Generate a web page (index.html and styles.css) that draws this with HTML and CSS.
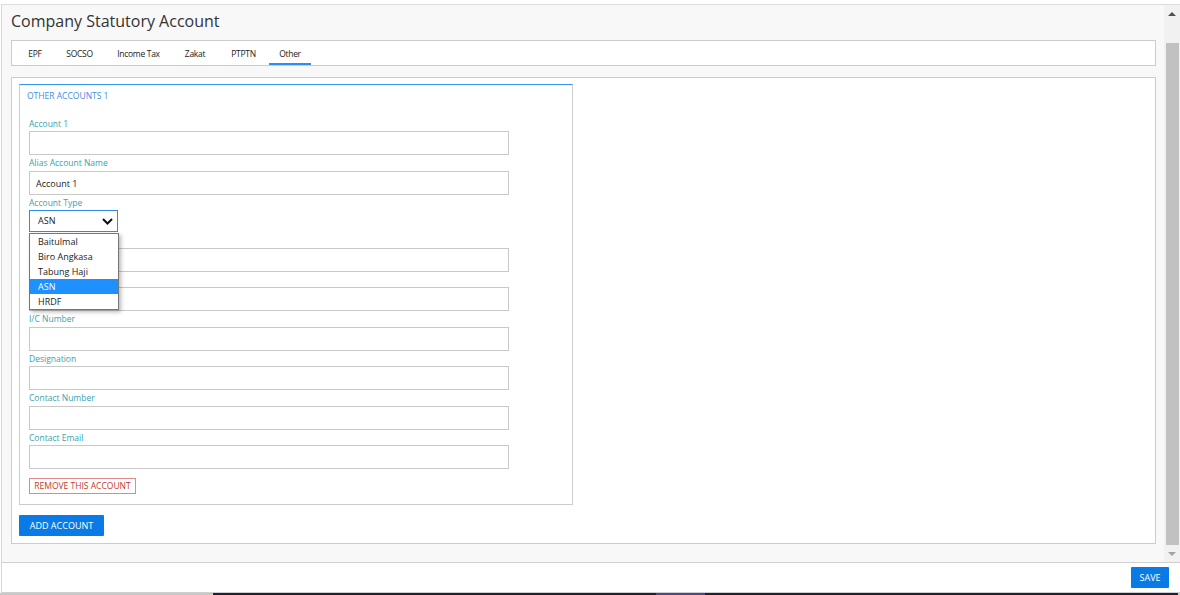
FILE: index.html
```html
<!DOCTYPE html>
<html>
<head>
<meta charset="utf-8">
<link rel="stylesheet" href="styles.css">
</head>
<body>
<div class="modal">
  <div class="main">
    <div class="body">
      <h1 class="title">Company Statutory Account</h1>
      <div class="tabs">
        <div class="tab">EPF</div>
        <div class="tab">SOCSO</div>
        <div class="tab">Income Tax</div>
        <div class="tab">Zakat</div>
        <div class="tab">PTPTN</div>
        <div class="tab active">Other</div>
      </div>
      <div class="panel">
        <div class="fieldset">
          <div class="legend">OTHER ACCOUNTS 1</div>
          <div class="group">
            <div class="label">Account 1</div>
            <div class="input"></div>
          </div>
          <div class="group">
            <div class="label">Alias Account Name</div>
            <div class="input">Account 1</div>
          </div>
          <div class="group select-group">
            <div class="label">Account Type</div>
            <div class="select">
              <span>ASN</span>
              <svg class="chev" width="11" height="7" viewBox="0 0 11 7"><polyline points="1,1 5.5,5.5 10,1" fill="none" stroke="#111" stroke-width="2"/></svg>
            </div>
            <div class="dropdown">
              <div class="opt">Baitulmal</div>
              <div class="opt">Biro Angkasa</div>
              <div class="opt">Tabung Haji</div>
              <div class="opt selected">ASN</div>
              <div class="opt">HRDF</div>
            </div>
          </div>
          <div class="group">
            <div class="label"></div>
            <div class="input"></div>
          </div>
          <div class="group">
            <div class="label"></div>
            <div class="input"></div>
          </div>
          <div class="group">
            <div class="label">I/C Number</div>
            <div class="input"></div>
          </div>
          <div class="group">
            <div class="label">Designation</div>
            <div class="input"></div>
          </div>
          <div class="group">
            <div class="label">Contact Number</div>
            <div class="input"></div>
          </div>
          <div class="group">
            <div class="label">Contact Email</div>
            <div class="input"></div>
          </div>
          <div class="remove">REMOVE THIS ACCOUNT</div>
        </div>
        <div class="add">ADD ACCOUNT</div>
      </div>
    </div>
    <div class="scrollbar">
      <div class="sb-btn"><span class="arrow-up"></span></div>
      <div class="sb-track"><div class="thumb"></div></div>
      <div class="sb-btn"><span class="arrow-down"></span></div>
    </div>
  </div>
  <div class="footer">
    <div class="save">SAVE</div>
  </div>
</div>
<div class="strip">
  <div class="s-gray"></div>
  <div class="s-dark"></div>
  <div class="s-purple"></div>
  <div class="s-dark2"></div>
  <div class="s-end"></div>
</div>
</body>
</html>
```

FILE: styles.css
```css
* { box-sizing: border-box; }
html, body { margin: 0; padding: 0; background: #fff; }
body {
  font-family: "Open Sans", "Noto Sans", sans-serif;
  color: #222;
  width: 1180px;
  height: 595px;
  overflow: hidden;
  padding-top: 4px;
}
.modal {
  margin-left: 1px;
  width: 1179px;
  height: 589px;
  border-top: 1px solid #dcdcdc;
  border-left: 1px solid #d6d6d6;
  border-bottom: 1px solid #cfcfcf;
  display: flex;
  flex-direction: column;
}
.main {
  height: 557px;
  display: flex;
  background: #f8f8f8;
}
.body {
  flex: 1;
  padding: 4px 8px 0 9px;
}
.title {
  margin: 0 0 7px 0;
  font-size: 16px;
  line-height: 24px;
  font-weight: 500;
  color: #333;
}
.tabs {
  height: 26px;
  background: #fff;
  border: 1px solid #cccccc;
  display: flex;
  padding-left: 4px;
}
.tab {
  font-size: 8.5px;
  letter-spacing: -0.3px;
  line-height: 22px;
  padding: 2px 0 0 0;
  border-bottom: 2px solid transparent;
  height: 24px;
  color: #222;
  text-align: center;
}
.tab:nth-child(1) { width: 38px; }
.tab:nth-child(2) { width: 51px; }
.tab:nth-child(3) { width: 67px; }
.tab:nth-child(4) { width: 46px; }
.tab:nth-child(5) { width: 51px; }
.tab:nth-child(6) { width: 42px; }
.tab.active { border-bottom-color: #2c8ef0; }
.panel {
  margin-top: 11px;
  background: #fff;
  border: 1px solid #cccccc;
  height: 467px;
  padding: 6px 7px 7px 7px;
}
.fieldset {
  width: 554px;
  height: 421px;
  border: 1px solid #cccccc;
  border-top-color: #3592ee;
  padding: 0 9px 10px 9px;
}
.legend {
  margin: 4px 0 12.5px -2px;
  font-size: 8.5px;
  line-height: 14px;
  color: #3d8fe6;
}
.group { position: relative; }
.label {
  font-size: 8.5px;
  line-height: 15.5px;
  height: 15.5px;
  color: #37a3ad;
}
.input {
  width: 480px;
  height: 24px;
  border: 1px solid #c8c8c8;
  background: #fff;
  font-size: 9px;
  line-height: 23px;
  padding-left: 6px;
  color: #222;
}
.select {
  width: 89px;
  height: 22px;
  border: 1px solid #2f8bea;
  background: #fff;
  font-size: 9px;
  line-height: 20px;
  padding: 0 4px 0 8px;
  display: flex;
  align-items: center;
  justify-content: space-between;
}
.chev { display: block; }
.dropdown {
  position: absolute;
  left: 0;
  top: 38.5px;
  width: 90px;
  border: 1px solid #767676;
  background: #fff;
  box-shadow: 2px 2px 4px rgba(0,0,0,0.28);
  z-index: 5;
}
.opt {
  height: 15px;
  line-height: 15px;
  font-size: 9px;
  padding-left: 8px;
  color: #222;
}
.opt.selected { background: #1e90ff; color: #fff; }
.remove {
  margin-top: 9px;
  width: 107px;
  height: 16px;
  border: 1px solid #dc8a8a;
  color: #c0392b;
  font-size: 8.5px;
  line-height: 14px;
  text-align: center;
  background: #fff;
}
.add {
  margin-top: 10px;
  width: 85px;
  height: 21px;
  background: #0a7be6;
  color: #fff;
  font-size: 9px;
  line-height: 21px;
  text-align: center;
  border-radius: 1px;
}
.scrollbar {
  width: 16px;
  background: #f1f1f1;
  display: flex;
  flex-direction: column;
}
.sb-btn {
  height: 17px;
  display: flex;
  align-items: center;
  justify-content: center;
}
.arrow-up {
  width: 0; height: 0;
  border-left: 4px solid transparent;
  border-right: 4px solid transparent;
  border-bottom: 4px solid #505050;
}
.arrow-down {
  width: 0; height: 0;
  border-left: 4px solid transparent;
  border-right: 4px solid transparent;
  border-top: 4px solid #a3a3a3;
}
.sb-track {
  flex: 1;
  padding: 21px 1px 0 2px;
}
.thumb {
  height: 502px;
  background: #c1c1c1;
}
.footer {
  flex: 1;
  border-top: 1px solid #cfcfcf;
  background: #fff;
  display: flex;
  justify-content: flex-end;
  padding: 4px 11px 0 0;
}
.save {
  width: 38px;
  height: 21px;
  background: #0a7be6;
  color: #fff;
  font-size: 9px;
  line-height: 21px;
  text-align: center;
  border-radius: 1px;
}
.strip {
  height: 2px;
  display: flex;
}
.s-gray { width: 213px; background: #c8c8c8; }
.s-dark { width: 443px; background: #1f1f3a; }
.s-purple { width: 49px; background: #4e4592; }
.s-dark2 { width: 473px; background: #1f1f3a; }
.s-end { flex: 1; background: #cccccc; }
```
